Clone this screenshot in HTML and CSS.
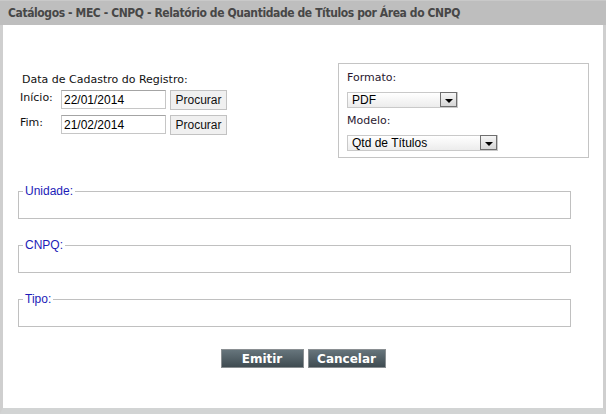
FILE: index.html
```html
<!DOCTYPE html>
<html lang="pt-br">
  <head>
    <meta charset="UTF-8" />
    <title>Relatório de Quantidade de Títulos por Área do CNPQ</title>
    <link rel="stylesheet" href="styles.css">
  </head>
  <body>
    <div id="janela">
      <div class="titulo">Catálogos - MEC - CNPQ - Relatório de Quantidade de Títulos por Área do CNPQ</div>
      <div class="conteudo">
        <div class="topo">
          <div class="datas">
            <p class="rotulo">Data de Cadastro do Registro:</p>
            <div class="linha">
              <span class="lbl">Início:</span>
              <input class="campo" type="text" value="22/01/2014" />
              <button class="btn-procurar">Procurar</button>
            </div>
            <div class="linha">
              <span class="lbl">Fim:</span>
              <input class="campo" type="text" value="21/02/2014" />
              <button class="btn-procurar">Procurar</button>
            </div>
          </div>
          <div class="opcoes">
            <p class="rotulo-opcao">Formato:</p>
            <div class="combo combo-curto">
              <span class="combo-valor">PDF</span>
              <span class="combo-seta"></span>
            </div>
            <p class="rotulo-opcao modelo">Modelo:</p>
            <div class="combo combo-longo">
              <span class="combo-valor">Qtd de Títulos</span>
              <span class="combo-seta"></span>
            </div>
          </div>
        </div>

        <fieldset class="grupo primeiro">
          <legend>Unidade:</legend>
        </fieldset>
        <fieldset class="grupo">
          <legend>CNPQ:</legend>
        </fieldset>
        <fieldset class="grupo">
          <legend>Tipo:</legend>
        </fieldset>

        <div class="acoes">
          <button class="btn-acao">Emitir</button>
          <button class="btn-acao">Cancelar</button>
        </div>
      </div>
    </div>
  </body>
</html>
```

FILE: styles.css
```css
* {
  margin: 0;
  padding: 0;
  box-sizing: border-box;
}

html,
body {
  width: 606px;
  height: 414px;
  overflow: hidden;
  background-color: #ffffff;
  font-family: "DejaVu Sans", Verdana, sans-serif;
  font-size: 11px;
  color: #111;
}

#janela {
  width: 606px;
  height: 414px;
  border-left: 3px solid #cfcfcf;
  border-right: 3px solid #cfcfcf;
  border-bottom: 6px solid #d2d4d4;
  background-color: #ffffff;
}

.titulo {
  height: 25px;
  margin: 0 -3px;
  padding: 0 0 0 8px;
  background-color: #bebebe;
  border-top: 1px solid #c9c9c9;
  color: #474747;
  font-family: "DejaVu Sans Condensed", "DejaVu Sans", sans-serif;
  font-stretch: condensed;
  font-weight: bold;
  font-size: 12px;
  letter-spacing: -0.4px;
  line-height: 24px;
  white-space: nowrap;
}

.conteudo {
  padding: 38px 0 0 15px;
}

.topo {
  display: flex;
  align-items: flex-start;
}

.datas {
  width: 320px;
  padding: 10px 0 0 2px;
}

.rotulo {
  line-height: 14px;
  padding-left: 2px;
  margin-bottom: 3px;
}

.linha {
  display: flex;
  align-items: flex-start;
  margin-bottom: 5px;
}

.lbl {
  width: 41px;
  line-height: 14px;
  margin-top: 1px;
}

.campo {
  width: 105px;
  height: 19px;
  border: 1px solid #c6c6c6;
  border-top-color: #a4a4a4;
  padding: 1px 0 0 2px;
  font-family: "Liberation Sans", Arial, sans-serif;
  font-size: 12px;
  color: #000;
  outline: none;
}

.btn-procurar {
  width: 57px;
  height: 20px;
  margin-left: 4px;
  background-color: #f0f0f0;
  border: 1px solid #c2c2c2;
  font-family: "Liberation Sans", Arial, sans-serif;
  font-size: 12px;
  color: #111;
}

.opcoes {
  width: 251px;
  height: 95px;
  border: 1px solid #c4c4c4;
  padding: 7px 0 0 8px;
}

.rotulo-opcao {
  line-height: 14px;
  color: #2a1830;
}

.modelo {
  margin-top: 6px;
}

.combo {
  display: flex;
  height: 16px;
  margin-top: 7px;
  border: 1px solid #c9c9c9;
  background: linear-gradient(#ffffff, #ececec);
}

.combo-curto {
  width: 111px;
}

.combo-longo {
  width: 151px;
}

.combo-valor {
  flex: 1;
  padding-left: 4px;
  font-family: "Liberation Sans", Arial, sans-serif;
  font-size: 12px;
  line-height: 14px;
  color: #000;
}

.combo-seta {
  position: relative;
  width: 17px;
  height: 15px;
  margin-top: -1px;
  border: 1px solid #6f6f6f;
  background: linear-gradient(#f6f6f6, #d6d6d6);
}

.combo-seta::after {
  content: "";
  position: absolute;
  left: 4px;
  top: 6px;
  border-left: 4px solid transparent;
  border-right: 4px solid transparent;
  border-top: 4px solid #000;
}

.grupo {
  width: 553px;
  height: 35px;
  margin: 19px 0 0 0;
  padding: 0 4px;
  border: 1px solid #c0c0c0;
}

.grupo.primeiro {
  margin-top: 26px;
}

.grupo legend {
  padding: 0 2px;
  font-family: "Liberation Sans", Arial, sans-serif;
  font-size: 12px;
  line-height: 14px;
  color: #1c1cb8;
}

.acoes {
  display: flex;
  justify-content: center;
  gap: 4px;
  margin: 22px 0 0 -15px;
}

.btn-acao {
  height: 19px;
  background: linear-gradient(#66757c, #3f4b51);
  border: 1px solid #8a8f92;
  color: #ffffff;
  font-family: "DejaVu Sans", Verdana, sans-serif;
  font-weight: bold;
  font-size: 12px;
  line-height: 16px;
}

.btn-acao:first-child {
  width: 83px;
}

.btn-acao:last-child {
  width: 78px;
}
```
